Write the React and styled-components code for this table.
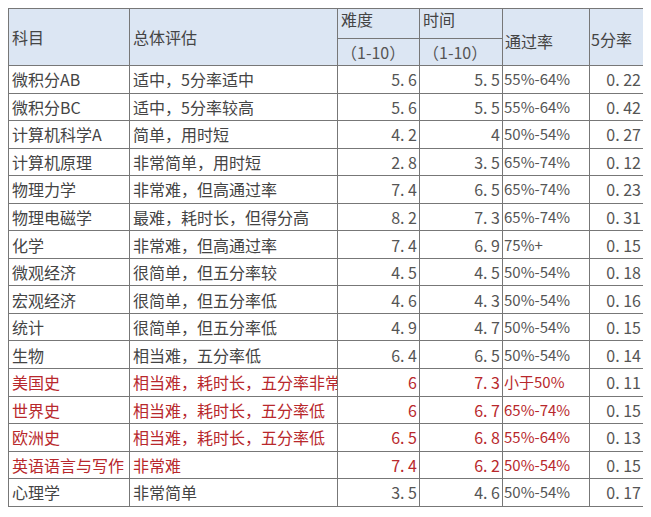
import React from 'react';
import styled, { createGlobalStyle } from 'styled-components';

const rows = [
    ['微积分AB', '适中，5分率适中', '5. 6', '5. 5', '55%-64%', '0. 22'],
    ['微积分BC', '适中，5分率较高', '5. 6', '5. 5', '55%-64%', '0. 42'],
    ['计算机科学A', '简单，用时短', '4. 2', '4', '50%-54%', '0. 27'],
    ['计算机原理', '非常简单，用时短', '2. 8', '3. 5', '65%-74%', '0. 12'],
    ['物理力学', '非常难，但高通过率', '7. 4', '6. 5', '65%-74%', '0. 23'],
    ['物理电磁学', '最难，耗时长，但得分高', '8. 2', '7. 3', '65%-74%', '0. 31'],
    ['化学', '非常难，但高通过率', '7. 4', '6. 9', '75%+', '0. 15'],
    ['微观经济', '很简单，但五分率较', '4. 5', '4. 5', '50%-54%', '0. 18'],
    ['宏观经济', '很简单，但五分率低', '4. 6', '4. 3', '50%-54%', '0. 16'],
    ['统计', '很简单，但五分率低', '4. 9', '4. 7', '50%-54%', '0. 15'],
    ['生物', '相当难，五分率低', '6. 4', '6. 5', '50%-54%', '0. 14'],
    ['美国史', '相当难，耗时长，五分率非常低', '6', '7. 3', '小于50%', '0. 11', true],
    ['世界史', '相当难，耗时长，五分率低', '6', '6. 7', '65%-74%', '0. 15', true],
    ['欧洲史', '相当难，耗时长，五分率低', '6. 5', '6. 8', '55%-64%', '0. 13', true],
    ['英语语言与写作', '非常难', '7. 4', '6. 2', '50%-54%', '0. 15', true],
    ['心理学', '非常简单', '3. 5', '4. 6', '50%-54%', '0. 17'],
];

const App = () => {
    return <>
        <GlobalStyle />
        <Table>
            <colgroup>
                <col style={{ width: 121 }} />
                <col style={{ width: 208 }} />
                <col style={{ width: 82 }} />
                <col style={{ width: 83 }} />
                <col style={{ width: 87 }} />
                <col style={{ width: 54 }} />
            </colgroup>
            <thead>
                <HeadRow $h={30}>
                    <Th rowSpan={2}>科目</Th>
                    <Th rowSpan={2}>总体评估</Th>
                    <Th $top>难度</Th>
                    <Th $top>时间</Th>
                    <Th rowSpan={2} $low>通过率</Th>
                    <Th rowSpan={2} $tight>5分率</Th>
                </HeadRow>
                <HeadRow $h={27}>
                    <Th $sub>（1-10）</Th>
                    <Th $sub>（1-10）</Th>
                </HeadRow>
            </thead>
            <tbody>
                {rows.map(([name, note, diff, time, pass, five, red]) => (
                    <Row key={name}>
                        <Td $red={red}>{name}</Td>
                        <Td $red={red}>{note}</Td>
                        <Num $red={red}>{diff}</Num>
                        <Num $red={red}>{time}</Num>
                        <Pct $red={red}>{pass}</Pct>
                        <Num>{five}</Num>
                    </Row>
                ))}
            </tbody>
        </Table>
    </>
};

const GlobalStyle = createGlobalStyle`
    body {
        margin: 8px;
        background: #fff;
        font-family: "Noto Sans CJK SC", "Liberation Sans", sans-serif;
    }
`;

const Table = styled.table`
    width: 635px;
    table-layout: fixed;
    border-collapse: collapse;
    font-size: 16px;
    color: #444;
    border: 1px solid #6a6a6a;
`;

const HeadRow = styled.tr`
    height: ${(p) => p.$h}px;
    background-color: #dce6f3;
`;

const Th = styled.th`
    border: 1px solid #777;
    font-weight: normal;
    text-align: left;
    padding: ${(p) => (p.$tight ? '3px 0 0 1px' : p.$low ? '8px 0 0 2px' : '0 0 0 3px')};
    vertical-align: ${(p) => (p.$top ? 'top' : 'middle')};
    line-height: 20px;
    white-space: nowrap;
    overflow: hidden;
    color: ${(p) => (p.$sub ? '#555' : '#444')};
`;

const Row = styled.tr`
    height: 27.56px;
`;

const Td = styled.td`
    border: 1px solid #777;
    padding: 0 0 0 3px;
    line-height: 20px;
    white-space: nowrap;
    overflow: hidden;
    color: ${(p) => (p.$red ? '#b8282c' : '#444')};
`;

const Num = styled(Td)`
    text-align: right;
    padding: 0 2px 0 0;
    color: ${(p) => (p.$red ? '#b8282c' : '#555')};
`;

const Pct = styled(Td)`
    padding: 0 0 0 1px;
    font-size: 15px;
    color: ${(p) => (p.$red ? '#b8282c' : '#555')};
`;

export default App;
